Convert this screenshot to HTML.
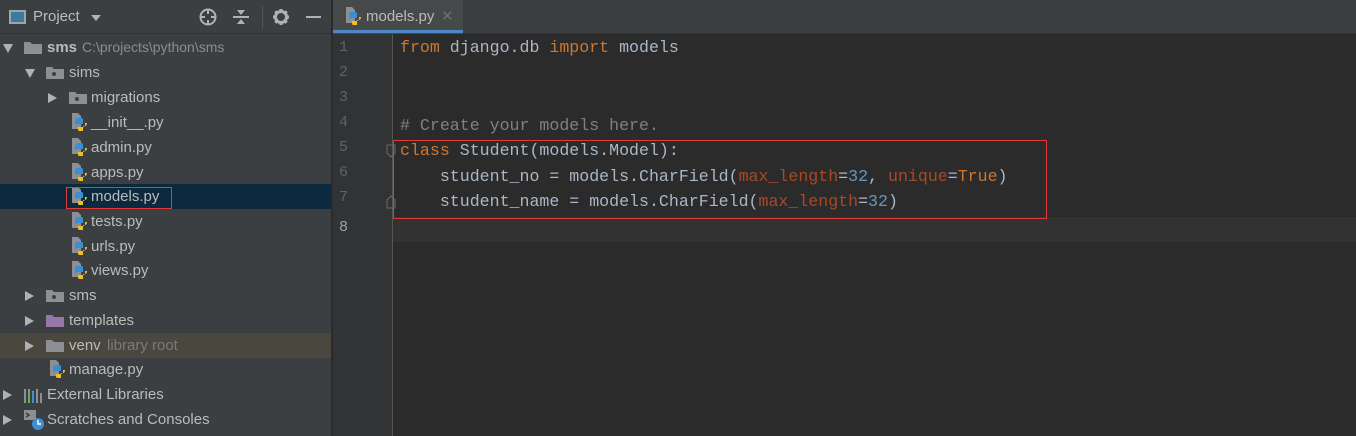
<!DOCTYPE html>
<html><head><meta charset="utf-8"><style>
*{margin:0;padding:0;box-sizing:border-box}
body{width:1356px;height:436px;overflow:hidden;background:#2b2b2b;position:relative;font-family:"Liberation Sans",sans-serif}
.a{position:absolute}
#side{left:0;top:0;width:331px;height:436px;background:#3c3f41}
.row{position:absolute;left:0;width:331px;height:25px;font-size:15px;color:#bbbbbb;line-height:25px}
.row span{position:absolute;top:0;white-space:nowrap}
.tri{position:absolute;top:8px;width:0;height:0}
.tri.d{border-left:5.5px solid transparent;border-right:5.5px solid transparent;border-top:9px solid #afb1b3;top:9px}
.tri.r{border-top:5.5px solid transparent;border-bottom:5.5px solid transparent;border-left:9px solid #afb1b3}
.ln{position:absolute;left:339px;font:15px "Liberation Mono",monospace;color:#606366}
.code{position:absolute;left:400px;font:16.6px "Liberation Mono",monospace;color:#a9b7c6;white-space:pre;line-height:25px}
.k{color:#cc7832}.c{color:#808080}.p{color:#aa4926}.n{color:#6897bb}
</style></head><body>
<svg width="0" height="0" style="position:absolute"><defs>
<g id="py"><path d="M1 1h6l3 3v13H1z" fill="#8c9094"/><path d="M4 9c0-2 1-3 3-3h3c2 0 2 1 2 2v4H7c-1 0-3 1-3 2z" fill="#3b8fd0"/><path d="M16 11c0 2-1 3-3 3h-1v5H9c-2 0-2-1-2-2v-2h5c1 0 2-1 2-2v-2z" fill="#f0c020"/></g>
<g id="fd"><path d="M0 2h6l2 2h10v10H0z" fill="#8c9094"/><circle cx="8" cy="9" r="2" fill="#3c3f41"/></g>
<g id="fp"><path d="M0 2h6l2 2h10v10H0z" fill="#8c9094"/></g>
</defs></svg>
<div id="side" class="a">
 <div class="a" style="left:0;top:0;width:331px;height:34px;border-bottom:1px solid #323232"></div>
 <div class="a" style="left:9px;top:10px;width:17px;height:14px;border:2px solid #9aa7b0;background:#3d7aa0"></div>
 <div class="a" style="left:33px;top:8px;font-size:15px;color:#bbbbbb">Project</div>
 <div class="a" style="left:91px;top:15px;border-left:5px solid transparent;border-right:5px solid transparent;border-top:6px solid #afb1b3"></div>
 <svg class="a" style="left:198px;top:7px" width="20" height="20"><circle cx="10" cy="10" r="7.5" fill="none" stroke="#afb1b3" stroke-width="2"/><path d="M10 2v5M10 13v5M2 10h5M13 10h5" stroke="#afb1b3" stroke-width="2"/></svg>
 <svg class="a" style="left:232px;top:8px" width="18" height="18"><path d="M1 9h16" stroke="#afb1b3" stroke-width="2"/><path d="M5 2h8l-4 5zM5 16h8l-4-5z" fill="#afb1b3"/></svg>
 <div class="a" style="left:262px;top:6px;width:1px;height:22px;background:#555"></div>
 <svg class="a" style="left:272px;top:8px" width="18" height="18"><circle cx="9" cy="9" r="5.5" fill="none" stroke="#afb1b3" stroke-width="3"/><path d="M9 1v4M9 13v4M1 9h4M13 9h4M3.3 3.3l2.8 2.8M11.9 11.9l2.8 2.8M3.3 14.7l2.8-2.8M11.9 6.1l2.8-2.8" stroke="#afb1b3" stroke-width="3"/></svg>
 <div class="a" style="left:306px;top:16px;width:15px;height:2px;background:#afb1b3"></div>

 <div class="row" style="top:35px"><i class="tri d" style="left:3px"></i><svg class="a" style="left:24px;top:5px" width="20" height="16"><use href="#fp"/></svg><span style="left:47px;font-weight:bold">sms</span><span style="left:82px;color:#8c8c8c;font-size:14px">C:\projects\python\sms</span></div>
 <div class="row" style="top:60px"><i class="tri d" style="left:25px"></i><svg class="a" style="left:46px;top:5px" width="20" height="16"><use href="#fd"/></svg><span style="left:69px">sims</span></div>
 <div class="row" style="top:85px"><i class="tri r" style="left:48px"></i><svg class="a" style="left:69px;top:5px" width="20" height="16"><use href="#fd"/></svg><span style="left:91px">migrations</span></div>
 <div class="row" style="top:110px"><svg class="a" style="left:71px;top:2px" width="18" height="21"><use href="#py"/></svg><span style="left:91px">__init__.py</span></div>
 <div class="row" style="top:135px"><svg class="a" style="left:71px;top:2px" width="18" height="21"><use href="#py"/></svg><span style="left:91px">admin.py</span></div>
 <div class="row" style="top:160px"><svg class="a" style="left:71px;top:2px" width="18" height="21"><use href="#py"/></svg><span style="left:91px">apps.py</span></div>
 <div class="row" style="top:184px;background:#0d293e"><svg class="a" style="left:71px;top:2px" width="18" height="21"><use href="#py"/></svg><span style="left:91px">models.py</span><div class="a" style="left:66px;top:3px;width:106px;height:22px;border:1px solid #e53935"></div></div>
 <div class="row" style="top:209px"><svg class="a" style="left:71px;top:2px" width="18" height="21"><use href="#py"/></svg><span style="left:91px">tests.py</span></div>
 <div class="row" style="top:234px"><svg class="a" style="left:71px;top:2px" width="18" height="21"><use href="#py"/></svg><span style="left:91px">urls.py</span></div>
 <div class="row" style="top:258px"><svg class="a" style="left:71px;top:2px" width="18" height="21"><use href="#py"/></svg><span style="left:91px">views.py</span></div>
 <div class="row" style="top:283px"><i class="tri r" style="left:25px"></i><svg class="a" style="left:46px;top:5px" width="20" height="16"><use href="#fd"/></svg><span style="left:69px">sms</span></div>
 <div class="row" style="top:308px"><i class="tri r" style="left:25px"></i><svg class="a" style="left:46px;top:5px" width="20" height="16"><path d="M0 2h6l2 2h10v10H0z" fill="#9876aa"/></svg><span style="left:69px">templates</span></div>
 <div class="row" style="top:333px;background:#49473e"><i class="tri r" style="left:25px"></i><svg class="a" style="left:46px;top:5px" width="20" height="16"><use href="#fp"/></svg><span style="left:69px">venv</span><span style="left:107px;color:#7a7a7a">library root</span></div>
 <div class="row" style="top:357px"><svg class="a" style="left:49px;top:2px" width="18" height="21"><use href="#py"/></svg><span style="left:69px">manage.py</span></div>
 <div class="row" style="top:382px"><i class="tri r" style="left:3px"></i><svg class="a" style="left:24px;top:5px" width="18" height="16"><path d="M1 2v14M5 2v14M9 4v12M13 2v14M17 6v10" stroke="#8c9094" stroke-width="2"/><path d="M5 6v10" stroke="#62b543" stroke-width="2"/><path d="M9 5v11" stroke="#3d8fd6" stroke-width="2"/></svg><span style="left:47px">External Libraries</span></div>
 <div class="row" style="top:407px"><i class="tri r" style="left:3px"></i><svg class="a" style="left:23px;top:2px" width="22" height="22"><path d="M1 1h12v10H1z" fill="#8c9094"/><path d="M3 4l3 2-3 2" stroke="#3c3f41" stroke-width="1.5" fill="none"/><circle cx="15" cy="15" r="6" fill="#3d8fd6"/><path d="M15 11v4h3" stroke="#fff" stroke-width="1.5" fill="none"/></svg><span style="left:47px">Scratches and Consoles</span></div>
</div>

<div class="a" style="left:331px;top:0;width:1025px;height:34px;background:#3c3f41;border-bottom:1px solid #323232"></div>
<div class="a" style="left:331px;top:0;width:2px;height:436px;background:#2b2b2b"></div>
<div class="a" style="left:333px;top:0;width:130px;height:34px;background:#45494a"></div>
<div class="a" style="left:333px;top:30px;width:130px;height:3px;background:#4a88c7"></div>
<svg class="a" style="left:345px;top:6px" width="18" height="21"><use href="#py"/></svg>
<div class="a" style="left:366px;top:8px;font-size:15px;color:#bbbbbb">models.py</div>
<div class="a" style="left:441px;top:7px;font-size:15px;color:#6e6e6e">✕</div>

<div class="a" style="left:333px;top:34px;width:59px;height:402px;background:#313335"></div>
<div class="a" style="left:392px;top:34px;width:1px;height:402px;background:#555555"></div>
<div class="a" style="left:393px;top:217px;width:963px;height:25px;background:#323232"></div>

<div class="ln" style="top:39px">1</div><div class="ln" style="top:64px">2</div><div class="ln" style="top:89px">3</div><div class="ln" style="top:114px">4</div><div class="ln" style="top:139px">5</div><div class="ln" style="top:164px">6</div><div class="ln" style="top:189px">7</div><div class="ln" style="top:219px;color:#a4a3a3">8</div>
<svg class="a" style="left:386px;top:144px" width="10" height="14"><path d="M1 1h8v8l-4 4-4-4z" fill="none" stroke="#6a6a6a"/></svg>
<svg class="a" style="left:386px;top:195px" width="10" height="14"><path d="M1 13h8V5L5 1 1 5z" fill="none" stroke="#6a6a6a"/></svg>

<div class="code" style="top:35px"><span class="k">from</span> django.db <span class="k">import</span> models</div>
<div class="code" style="top:113px"><span class="c"># Create your models here.</span></div>
<div class="code" style="top:138px"><span class="k">class</span> Student(models.Model):</div>
<div class="code" style="top:164px">    student_no = models.CharField(<span class="p">max_length</span>=<span class="n">32</span>, <span class="p">unique</span>=<span class="k">True</span>)</div>
<div class="code" style="top:189px">    student_name = models.CharField(<span class="p">max_length</span>=<span class="n">32</span>)</div>
<div class="a" style="left:393px;top:140px;width:654px;height:79px;border:1px solid #e53935"></div>
</body></html>
